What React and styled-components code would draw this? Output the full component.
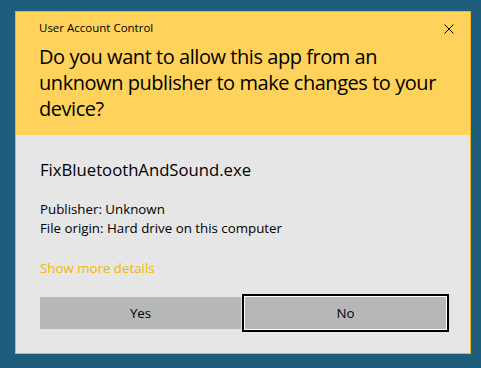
import React from 'react';
import styled, { createGlobalStyle } from 'styled-components';

const GlobalStyle = createGlobalStyle`
  html, body {
    margin: 0;
    padding: 0;
    background: #1e5d7b;
    font-family: "Segoe UI", "Open Sans", "Noto Sans", sans-serif;
  }
  #root {
    padding: 11px 0 0 15px;
    height: 368px;
    box-sizing: border-box;
  }
`

const Dialog = styled.div`
  width: 456px;
  height: 343px;
  box-sizing: border-box;
  border: 1px solid #f1b51c;
  background: #e6e6e6;
  display: flex;
  flex-direction: column;
`

const Header = styled.div`
  position: relative;
  background: #ffd35b;
  height: 123px;
  flex-shrink: 0;
  box-sizing: border-box;
  padding: 8px 24px 0 23px;
  color: #000;
`

const Caption = styled.div`
  font-size: 11.5px;
  line-height: 16px;
`

const Question = styled.div`
  margin-top: 8px;
  font-size: 20px;
  line-height: 26px;
  letter-spacing: -0.45px;
  white-space: nowrap;
`

const CloseButton = styled.button`
  position: absolute;
  top: 9px;
  right: 13px;
  width: 16px;
  height: 16px;
  padding: 0;
  border: none;
  background: transparent;
  display: flex;
  align-items: center;
  justify-content: center;
`

const Body = styled.div`
  padding: 24px 24px 0 24px;
  display: flex;
  flex-direction: column;
`

const AppName = styled.div`
  font-size: 16.7px;
  line-height: 22px;
  color: #000;
`

const Details = styled.div`
  margin-top: 19px;
  font-size: 13.3px;
  line-height: 19px;
  color: #000;
`

const MoreLink = styled.div`
  margin-top: 22px;
  font-size: 13.3px;
  line-height: 16px;
  color: #f2b800;
`

const Buttons = styled.div`
  margin-top: 21px;
  display: grid;
  grid-template-columns: 201px 201px;
  column-gap: 4px;
`

const Button = styled.button`
  height: 32px;
  border: none;
  background: #b7b7b7;
  font-family: inherit;
  font-size: 13.3px;
  color: #000;
  box-shadow: ${p => p.$focused ? '0 0 0 1px #fff, 0 0 0 3px #000' : 'none'};
`

function App() {
  return (
    <>
      <GlobalStyle />
      <Dialog>
        <Header>
          <Caption>User Account Control</Caption>
          <Question>
            Do you want to allow this app from an<br />
            unknown publisher to make changes to your<br />
            device?
          </Question>
          <CloseButton aria-label="Close">
            <svg width="10" height="10" viewBox="0 0 10 10">
              <path d="M0.5 0.5 L9.5 9.5 M9.5 0.5 L0.5 9.5" stroke="#000" strokeWidth="1" />
            </svg>
          </CloseButton>
        </Header>
        <Body>
          <AppName>FixBluetoothAndSound.exe</AppName>
          <Details>
            Publisher: Unknown<br />
            File origin: Hard drive on this computer
          </Details>
          <MoreLink>Show more details</MoreLink>
          <Buttons>
            <Button>Yes</Button>
            <Button $focused>No</Button>
          </Buttons>
        </Body>
      </Dialog>
    </>
  )
}

export default App;
